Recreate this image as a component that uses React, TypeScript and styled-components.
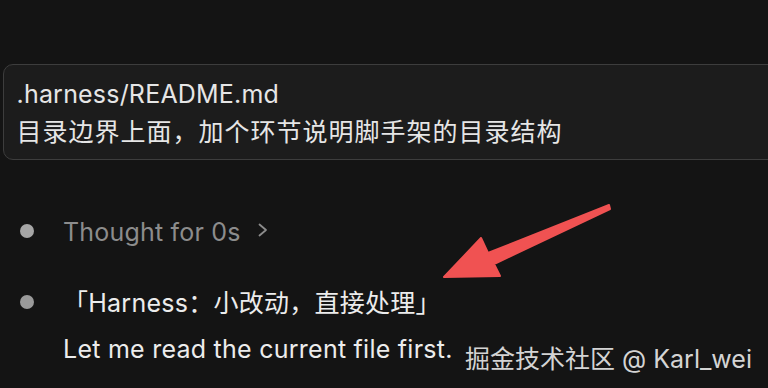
import React from "react";
import styled, { createGlobalStyle } from "styled-components";

const Global = createGlobalStyle`
  html, body {
    margin: 0;
    padding: 0;
    background: #141414;
    overflow: hidden;
  }
  body {
    font-family: "Inter", "Noto Sans CJK SC", sans-serif;
    -webkit-font-smoothing: antialiased;
  }
`;

const Page = styled.div`
  position: relative;
  width: 768px;
  height: 388px;
  overflow: hidden;
  padding-top: 64px;
  box-sizing: border-box;
`;

const PromptBox = styled.div`
  margin-left: 3px;
  margin-right: -24px;
  border: 1.5px solid #3d3d3d;
  border-radius: 10px;
  background: #1c1c1c;
  padding: 10px 12px 8px 12.5px;
  display: flex;
  flex-direction: column;
`;

const PromptLine = styled.div<{ $spacing?: number }>`
  font-size: 25px;
  line-height: 38px;
  color: #e6e6e6;
  white-space: nowrap;
  letter-spacing: ${(p) => p.$spacing ?? 0.2}px;
`;

const Timeline = styled.div`
  display: flex;
  flex-direction: column;
  gap: 33px;
  margin-top: 53px;
`;

const Item = styled.div`
  display: grid;
  grid-template-columns: 14px 1fr;
  column-gap: 29px;
  padding-left: 20px;
  align-items: start;
`;

const DotCell = styled.div`
  height: 38px;
  display: flex;
  align-items: center;
`;

const Dot = styled.span<{ $tone: string }>`
  width: 14px;
  height: 14px;
  border-radius: 50%;
  margin-top: -2px;
  background: ${(p) => p.$tone};
`;

const Body = styled.div`
  display: flex;
  flex-direction: column;
  gap: 8px;
`;

const ThoughtRow = styled.div`
  display: flex;
  align-items: center;
  gap: 16px;
  height: 38px;
  font-size: 25px;
  letter-spacing: 0.2px;
  color: #8c8c8c;
  white-space: nowrap;
`;

const Chevron = styled.svg`
  width: 12px;
  height: 14px;
  margin-top: -4px;
`;

const TextLine = styled.div`
  font-size: 25px;
  line-height: 38px;
  letter-spacing: 0.25px;
  color: #ececec;
  white-space: nowrap;
`;

const Watermark = styled.div`
  position: absolute;
  right: 16px;
  bottom: 12px;
  font-size: 25px;
  line-height: 34px;
  color: #d4d4d4;
  white-space: nowrap;
`;

const Arrow = styled.svg`
  position: absolute;
  left: 0;
  top: 0;
  width: 768px;
  height: 388px;
  pointer-events: none;
`;

export default function App() {
  return (
    <>
      <Global />
      <Page>
        <PromptBox>
          <PromptLine>.harness/README.md</PromptLine>
          <PromptLine $spacing={1}>目录边界上面，加个环节说明脚手架的目录结构</PromptLine>
        </PromptBox>
        <Timeline>
          <Item>
            <DotCell>
              <Dot $tone="#a6a6a6" />
            </DotCell>
            <ThoughtRow>
              <span>Thought for 0s</span>
              <Chevron viewBox="0 0 12 14">
                <path
                  d="M2.5 1.5 L9 7 L2.5 12.5"
                  fill="none"
                  stroke="#8c8c8c"
                  strokeWidth="1.8"
                  strokeLinecap="round"
                  strokeLinejoin="round"
                />
              </Chevron>
            </ThoughtRow>
          </Item>
          <Item>
            <DotCell>
              <Dot $tone="#9a9a9a" />
            </DotCell>
            <Body>
              <TextLine>「Harness：小改动，直接处理」</TextLine>
              <TextLine>Let me read the current file first.</TextLine>
            </Body>
          </Item>
        </Timeline>
        <Arrow viewBox="0 0 768 388">
          <polygon
            points="609,205 488,253 481,238 444,277 500,276 494,264 610,209"
            fill="#f05252"
            stroke="#f05252"
            strokeWidth="2"
            strokeLinejoin="round"
          />
        </Arrow>
        <Watermark>掘金技术社区 @ Karl_wei</Watermark>
      </Page>
    </>
  );
}
